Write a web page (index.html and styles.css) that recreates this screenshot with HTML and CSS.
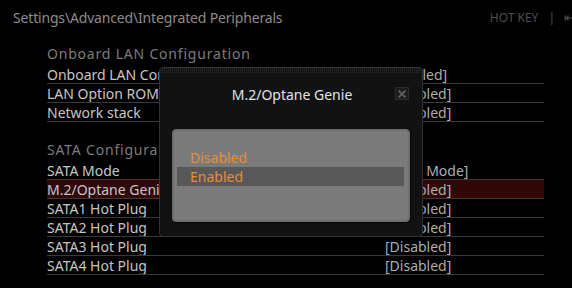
FILE: index.html
```html
<!DOCTYPE html>
<html lang="en">
<head>
  <meta charset="UTF-8">
  <title>Integrated Peripherals</title>
  <link rel="stylesheet" href="styles.css">
</head>
<body>

  <div class="topbar">
    <div class="crumbs">Settings\Advanced\Integrated Peripherals</div>
    <div class="hotkey">HOT KEY<span class="sep">|</span><span class="back">&#8676;</span></div>
  </div>

  <div class="list">
    <div class="group">Onboard LAN Configuration</div>
    <div class="row"><span class="name">Onboard LAN Controller</span><span class="value">[Enabled]</span></div>
    <div class="row"><span class="name">LAN Option ROM</span><span class="value">[Disabled]</span></div>
    <div class="row"><span class="name">Network stack</span><span class="value">[Disabled]</span></div>

    <div class="group">SATA Configuration</div>
    <div class="row"><span class="name">SATA Mode</span><span class="value">[AHCI Mode]</span></div>
    <div class="row selected"><span class="name">M.2/Optane Genie</span><span class="value">[Disabled]</span></div>
    <div class="row"><span class="name">SATA1 Hot Plug</span><span class="value">[Disabled]</span></div>
    <div class="row"><span class="name">SATA2 Hot Plug</span><span class="value">[Disabled]</span></div>
    <div class="row"><span class="name">SATA3 Hot Plug</span><span class="value">[Disabled]</span></div>
    <div class="row"><span class="name">SATA4 Hot Plug</span><span class="value">[Disabled]</span></div>
  </div>

  <div class="dialog">
    <div class="grip"></div>
    <div class="dialog-head">
      <span class="dialog-title">M.2/Optane Genie</span>
    </div>
    <span class="close">
      <svg width="10" height="10" viewBox="0 0 10 10"><path d="M1.5 1.5 L8.5 8.5 M8.5 1.5 L1.5 8.5" stroke="#5a5a5a" stroke-width="1.8"/></svg>
    </span>
    <div class="options">
      <div class="option">Disabled</div>
      <div class="option active">Enabled</div>
    </div>
  </div>

</body>
</html>
```

FILE: styles.css
```css
* {
  box-sizing: border-box;
}

body {
  margin: 0;
  padding: 0;
  background: #000;
  font-family: "Noto Sans", "Open Sans", sans-serif;
  font-size: 14px;
  color: #c4c4c4;
  overflow: hidden;
}

.topbar {
  display: flex;
  justify-content: space-between;
  align-items: center;
  height: 34px;
  padding-left: 13px;
}

.crumbs {
  color: #8c8c8c;
  font-size: 14px;
  letter-spacing: -0.17px;
}

.hotkey {
  display: flex;
  align-items: center;
  font-size: 12px;
  color: #4e4e4e;
  white-space: nowrap;
  margin-right: -12px;
}

.hotkey .sep {
  margin: 0 9px 0 10px;
}

.hotkey .back {
  font-size: 13px;
  width: 20px;
}

.list {
  margin-left: 47px;
  width: 497px;
}

.group {
  height: 19px;
  line-height: 15px;
  margin-top: 12px;
  color: #7c7c7c;
  letter-spacing: 0.8px;
}

.row + .group {
  margin-top: 20px;
}

.row {
  display: flex;
  height: 19px;
  line-height: 18px;
  padding-top: 1px;
  border-bottom: 1px solid #3a3a3a;
}

.row .name {
  width: 338px;
  color: #c6c6c6;
  white-space: nowrap;
  overflow: hidden;
}

.row .value {
  color: #adadad;
}

.row.selected {
  background: #310707;
}

.dialog {
  position: absolute;
  left: 159px;
  top: 67px;
  width: 264px;
  height: 170px;
  background: #121212;
  border: 1px solid #333;
  border-radius: 4px;
  padding: 0 12px;
}

.grip {
  height: 5px;
  margin: 0 -12px;
  border-radius: 3px 3px 0 0;
  background-color: #1a1a1a;
  background-image:
    repeating-linear-gradient(90deg, transparent 0 1px, #121212 1px 2px),
    repeating-linear-gradient(0deg, #2c2c2c 0 1px, transparent 1px 2px);
}

.dialog-head {
  display: flex;
  justify-content: center;
  height: 56px;
  padding-top: 12px;
  line-height: 19px;
}

.dialog-title {
  color: #e2e2e2;
  font-size: 14px;
  margin-left: 2px;
}

.close {
  position: absolute;
  right: 13px;
  top: 19px;
  width: 14px;
  height: 13px;
  background: #1c1c1c;
  border: 1px solid #2c2c2c;
  display: flex;
  align-items: center;
  justify-content: center;
}

.options {
  height: 93px;
  background: #7b7b7b;
  border: 1px solid #6c6c6c;
  border-radius: 4px;
  box-shadow: inset 0 0 2px rgba(0, 0, 0, 0.3), 1px 1px 2px rgba(0, 0, 0, 0.6);
  padding: 18px 5px 0 4px;
}

.option {
  height: 19px;
  line-height: 19px;
  padding-left: 13px;
  color: #e58e3c;
}

.option.active {
  background: #585858;
}
```
